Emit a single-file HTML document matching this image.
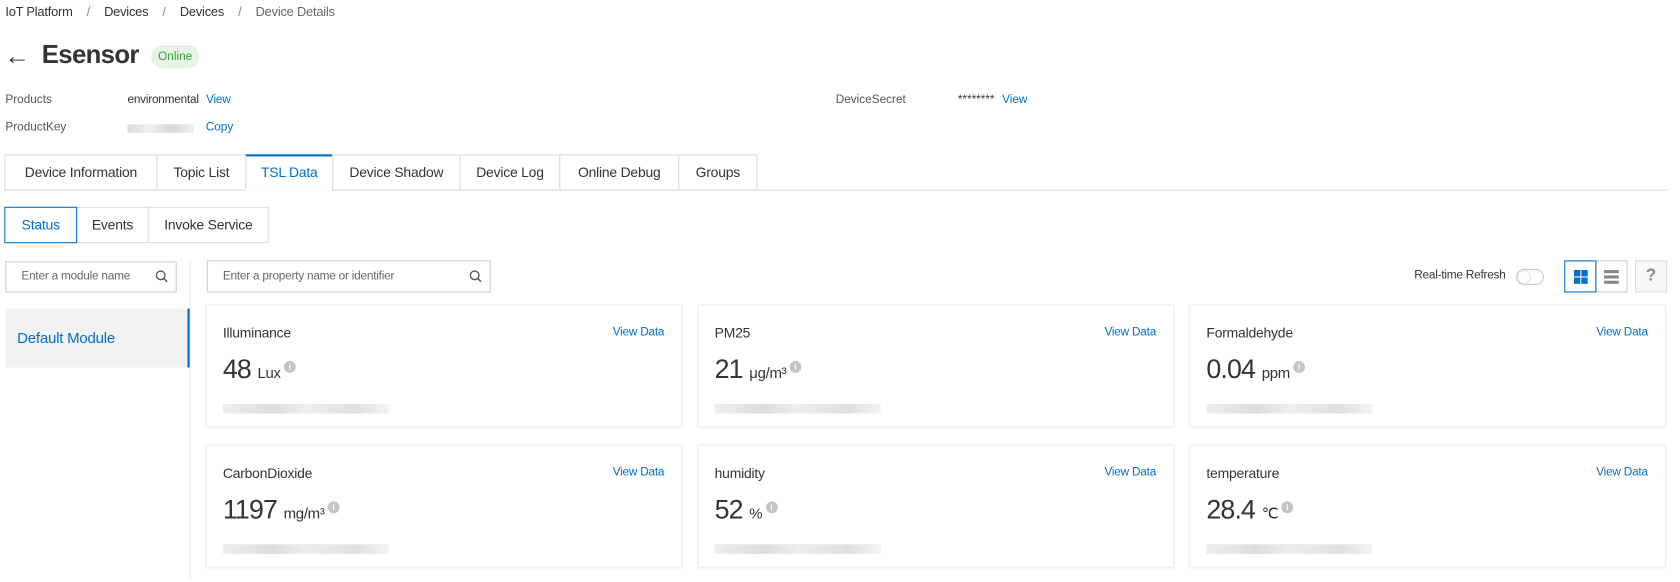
<!DOCTYPE html>
<html><head><meta charset="utf-8"><style>
*{box-sizing:border-box;margin:0;padding:0}
body{width:1680px;height:581px;background:#fff;font-family:"Liberation Sans",sans-serif;color:#333;overflow:hidden;font-size:12px}
#w{position:absolute;left:0;top:0;width:1568px;height:543px;transform:scale(1.0714);transform-origin:0 0}
.a{position:absolute}
.blue{color:#0070cc}
.tab{position:absolute;top:144px;height:34px;border:1px solid #ddd;line-height:32px;text-align:center;font-size:13px;color:#333;background:#fff;letter-spacing:-0.2px}
.card{position:absolute;width:445px;height:115px;border:1px solid #eee;box-shadow:0 1px 3px rgba(0,0,0,.06)}
.card .t{position:absolute;left:15px;top:18px;font-size:13px;color:#333;letter-spacing:-0.2px}
.card .v{position:absolute;right:16px;top:19px;font-size:11px;color:#0070cc;letter-spacing:-0.2px}
.card .n{position:absolute;left:15px;top:46px;font-size:25px;color:#333;letter-spacing:-0.8px}
.card .n span{font-size:14px;letter-spacing:-0.3px}
.card .n i{display:inline-block;width:11px;height:11px;border-radius:50%;background:#c4c4c4;vertical-align:8px;margin-left:3px;color:#fff;font-size:8px;font-style:normal;text-align:center;line-height:11px;font-weight:bold;letter-spacing:0}
.card .b{position:absolute;left:15px;top:92px;width:155px;height:9px;background:linear-gradient(90deg,#eee,#ddd 30%,#eee 50%,#e0e0e0 80%,#f3f3f3)}
.blur{background:linear-gradient(90deg,#ddd,#eee,#d8d8d8,#eee)}
</style></head><body><div id="w">
<div class="a" style="left:5px;top:4px;font-size:12px;color:#333;letter-spacing:-0.2px">IoT Platform <span style="color:#888;margin:0 10px">/</span> Devices <span style="color:#888;margin:0 10px">/</span> Devices <span style="color:#888;margin:0 10px">/</span> <span style="color:#666">Device Details</span></div>
<div class="a" style="left:4px;top:39px;font-size:24px;color:#333">&#8592;</div>
<div class="a" style="left:39px;top:38px;font-size:24px;font-weight:bold;color:#333;letter-spacing:-0.6px">Esensor</div>
<div class="a" style="left:141px;top:42px;width:45px;height:22px;border-radius:11px;background:#e6f4e6;color:#3a9a3a;font-size:11px;line-height:22px;text-align:center">Online</div>
<div class="a" style="left:5px;top:87px;font-size:11px;color:#555">Products</div>
<div class="a" style="left:119px;top:87px;font-size:11px;color:#333;letter-spacing:-0.2px">environmental <span class="blue" style="margin-left:4px">View</span></div>
<div class="a" style="left:5px;top:113px;font-size:11px;color:#555">ProductKey</div>
<div class="a blur" style="left:119px;top:116px;width:62px;height:8px"></div>
<div class="a blue" style="left:192px;top:113px;font-size:11px">Copy</div>
<div class="a" style="left:780px;top:87px;font-size:11px;color:#555">DeviceSecret</div>
<div class="a" style="left:894px;top:87px;font-size:11px;color:#333">******** <span class="blue" style="margin-left:4px">View</span></div>
<div class="a" style="left:4px;top:177px;width:1552px;height:1px;background:#ddd"></div>
<div class="tab" style="left:4px;width:143px">Device Information</div>
<div class="tab" style="left:146px;width:84px">Topic List</div>
<div class="tab" style="left:229px;width:82px;border-top:2px solid #0070cc;border-bottom-color:#fff;color:#0070cc;line-height:30px">TSL Data</div>
<div class="tab" style="left:310px;width:120px">Device Shadow</div>
<div class="tab" style="left:429px;width:94px">Device Log</div>
<div class="tab" style="left:522px;width:112px">Online Debug</div>
<div class="tab" style="left:633px;width:74px">Groups</div>
<div class="tab" style="top:193px;left:4px;width:68px;border-color:#0070cc;color:#0070cc;z-index:2">Status</div>
<div class="tab" style="top:193px;left:71px;width:68px">Events</div>
<div class="tab" style="top:193px;left:138px;width:113px">Invoke Service</div>
<div class="a" style="left:5px;top:244px;width:160px;height:29px;border:1px solid #ccc;font-size:11px;color:#666;line-height:27px;padding-left:14px;letter-spacing:-0.2px">Enter a module name</div>
<svg class="a" style="left:145px;top:252px" width="12" height="12" viewBox="0 0 12 12"><circle cx="5" cy="5" r="4" fill="none" stroke="#555" stroke-width="1.3"/><path d="M8 8l3 3" stroke="#555" stroke-width="1.4"/></svg>
<div class="a" style="left:177px;top:243px;width:1px;height:298px;background:#e5e5e5"></div>
<div class="a" style="left:5px;top:288px;width:172px;height:55px;background:#f2f2f2;border-right:2px solid #0070cc;color:#0070cc;font-size:14px;line-height:55px;padding-left:11px;letter-spacing:-0.2px">Default Module</div>
<div class="a" style="left:193px;top:243px;width:265px;height:30px;border:1px solid #ccc;font-size:11px;color:#666;line-height:28px;padding-left:14px;letter-spacing:-0.2px">Enter a property name or identifier</div>
<svg class="a" style="left:438px;top:252px" width="12" height="12" viewBox="0 0 12 12"><circle cx="5" cy="5" r="4" fill="none" stroke="#555" stroke-width="1.3"/><path d="M8 8l3 3" stroke="#555" stroke-width="1.4"/></svg>
<div class="a" style="left:1320px;top:251px;font-size:11px;color:#333;letter-spacing:-0.2px">Real-time Refresh</div>
<div class="a" style="left:1415px;top:251px;width:26px;height:15px;border:1px solid #ccc;border-radius:8px"><div style="position:absolute;left:1px;top:1px;width:11px;height:11px;border-radius:50%;background:#fff;box-shadow:0 0 2px #aaa"></div></div>
<div class="a" style="left:1460px;top:243px;width:30px;height:30px;border:1px solid #0070cc;z-index:2"><svg style="position:absolute;left:8px;top:8px" width="13" height="13"><rect x="0" y="0" width="6" height="6" fill="#0070cc"/><rect x="7" y="0" width="6" height="6" fill="#0070cc"/><rect x="0" y="7" width="6" height="6" fill="#0070cc"/><rect x="7" y="7" width="6" height="6" fill="#0070cc"/></svg></div>
<div class="a" style="left:1489px;top:243px;width:30px;height:30px;border:1px solid #ccc"><svg style="position:absolute;left:7px;top:8px" width="14" height="13"><rect y="0" width="14" height="3" fill="#888"/><rect y="5" width="14" height="3" fill="#888"/><rect y="10" width="14" height="3" fill="#888"/></svg></div>
<div class="a" style="left:1526px;top:243px;width:30px;height:30px;border:1px solid #ddd;background:#f7f7f7;text-align:center;line-height:28px;font-size:16px;font-weight:bold;color:#888">?</div>

<div class="card" style="left:192px;top:284px"><div class="t">Illuminance</div><div class="v">View Data</div><div class="n">48 <span>Lux</span><i>i</i></div><div class="b"></div></div>
<div class="card" style="left:651px;top:284px"><div class="t">PM25</div><div class="v">View Data</div><div class="n">21 <span>μg/m³</span><i>i</i></div><div class="b"></div></div>
<div class="card" style="left:1110px;top:284px"><div class="t">Formaldehyde</div><div class="v">View Data</div><div class="n">0.04 <span>ppm</span><i>i</i></div><div class="b"></div></div>
<div class="card" style="left:192px;top:415px"><div class="t">CarbonDioxide</div><div class="v">View Data</div><div class="n">1197 <span>mg/m³</span><i>i</i></div><div class="b"></div></div>
<div class="card" style="left:651px;top:415px"><div class="t">humidity</div><div class="v">View Data</div><div class="n">52 <span>%</span><i>i</i></div><div class="b"></div></div>
<div class="card" style="left:1110px;top:415px"><div class="t">temperature</div><div class="v">View Data</div><div class="n">28.4 <span>℃</span><i>i</i></div><div class="b"></div></div>
</div></body></html>
